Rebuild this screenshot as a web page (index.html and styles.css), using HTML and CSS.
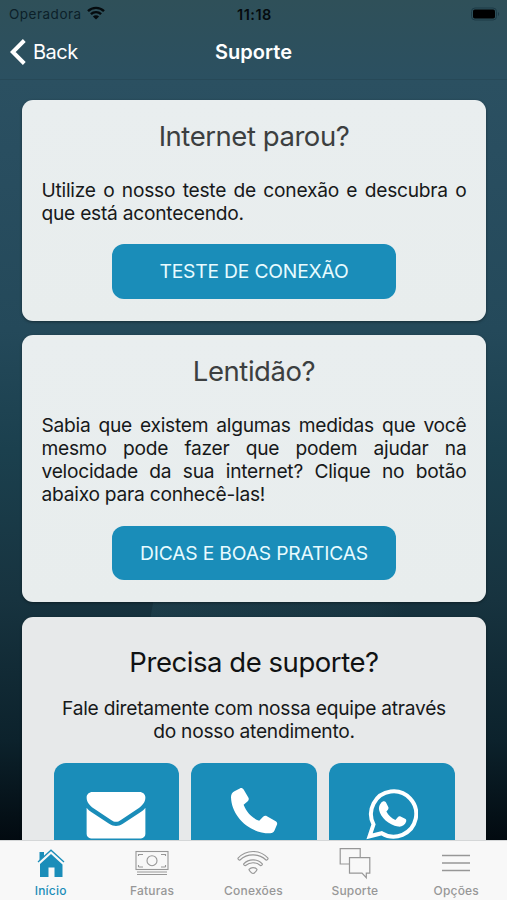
FILE: index.html
```html
<!DOCTYPE html>
<html lang="pt-BR">
<head>
  <meta charset="UTF-8">
  <meta name="viewport" content="width=device-width, initial-scale=1.0">
  <title>Suporte</title>
  <link rel="stylesheet" href="styles.css">
</head>
<body>

  <header class="header">
    <div class="status-bar">
      <div class="carrier">
        <span>Operadora</span>
        <svg class="wifi" viewBox="0 0 18 14" fill="none" stroke="#050b0e" stroke-width="2.4">
          <path d="M1 5.2a11.3 11.3 0 0 1 16 0M3.9 8.2a7.2 7.2 0 0 1 10.2 0"/>
          <path d="M9 13.6L5.9 10.5a4.4 4.4 0 0 1 6.2 0z" fill="#050b0e" stroke="none"/>
        </svg>
      </div>
      <span class="clock">11:18</span>
      <svg class="battery" viewBox="0 0 30 14">
        <rect x="1.500" y="1" width="25" height="12" rx="3.5" fill="none" stroke="#1c3a46"/>
        <rect x="3" y="2.500" width="22" height="9" rx="1.800" fill="#000"/>
        <path d="M28 5v4c1.500-.8 1.500-3.200 0-4z" fill="#1c3a46"/>
      </svg>
    </div>
    <nav class="nav-bar">
      <a class="back" href="#">
        <svg viewBox="0 0 16 26" fill="none" stroke="#fff" stroke-width="4"><path d="M14.300 1.500L2.800 13l11.500 11.500"/></svg>
        <span>Back</span>
      </a>
      <h1 class="nav-title">Suporte</h1>
    </nav>
  </header>

  <main class="content">
    <section class="card">
      <h2 class="card-title">Internet parou?</h2>
      <p class="card-text">Utilize o nosso teste de conexão e descubra o que está acontecendo.</p>
      <button class="btn">TESTE DE CONEXÃO</button>
    </section>

    <section class="card">
      <h2 class="card-title">Lentidão?</h2>
      <p class="card-text">Sabia que existem algumas medidas que você mesmo pode fazer que podem ajudar na velocidade da sua internet? Clique no botão abaixo para conhecê-las!</p>
      <button class="btn">DICAS E BOAS PRATICAS</button>
    </section>

    <section class="card card-support">
      <h2 class="card-title">Precisa de suporte?</h2>
      <p class="card-text">Fale diretamente com nossa equipe através do nosso atendimento.</p>
      <div class="contacts">
        <button class="contact contact-mail" aria-label="E-mail">
          <svg width="60" height="47" viewBox="0 0 60 48" fill="#fff">
            <path d="M6 0h48c3.500 0 6 2.500 6 5.500 0 5-3 8-7 11L35 28.500c-3.500 2.500-6.500 2.500-10 0L7 16.500C3 13.500 0 10.500 0 5.500 0 2.500 2.500 0 6 0z"/>
            <path d="M0 16c1.500 2 3.500 3.500 5.500 5L23 32.500c5 3 9 3 14 0L54.500 21c2-1.500 4-3 5.500-5v27c0 2.500-2 4.500-4.500 4.500h-51C2 47.500 0 45.500 0 43z"/>
          </svg>
        </button>
        <button class="contact" aria-label="Telefone">
          <svg width="47" height="47" viewBox="0 0 48 48" fill="#fff">
            <path d="M3.500 3.300L9 .4c1.500-.8 3-.3 3.900 1.200l4.800 8.200c.8 1.300.5 2.800-.6 3.800l-4.200 3.600c2.900 7.600 8.400 13.500 15.900 16.300l4-4.100c1.100-1.100 2.600-1.300 3.900-.5l9 5.100c1.300.8 1.800 2.200 1.200 3.600l-2.600 6c-.7 1.600-2.200 2.600-4.200 2.600C18.500 46.500.500 29 0 9.200 0 6.500 1.300 4.500 3.500 3.300z"/>
          </svg>
        </button>
        <button class="contact" aria-label="WhatsApp">
          <svg width="52" height="52" viewBox="0 0 52 52">
            <path d="M3.500 48.300l4-12A22.600 22.600 0 1 1 15.700 45.200z" fill="none" stroke="#fff" stroke-width="4"/>
            <path d="M15.200 14.700c1.200-1.600 3.600-2 4.700-.5l2.500 5c.6 1.300-.8 3.200-2 4.300 2 4 5 6.700 9 8.500l2.600-3c.7-.9 1.600-1 2.600-.5l4.500 2.300c1.300.7 1.400 1.500 1 3-1 3.500-4.700 5.400-8 4.800-9.500-1.600-17.500-9-19-16.500-.6-3 .5-5.600 2.100-7.400z" fill="#fff"/>
          </svg>
        </button>
      </div>
    </section>
  </main>

  <nav class="tab-bar">
    <a class="tab active" href="#">
      <svg width="30" height="32" viewBox="0 0 30 32">
        <path d="M4 16L15 6l11.500 10.500V29H18.500V19.500h-6V29H4zM3.500 4H8v4.500l-4.500 4z" fill="#1a8db9"/>
        <path d="M2 14L15 2.200l13 11.800" fill="none" stroke="#1a8db9" stroke-width="1.300"/>
      </svg>
      <span>Início</span>
    </a>
    <a class="tab" href="#">
      <svg width="34" height="32" viewBox="0 0 34 32" fill="none" stroke="#979797" stroke-width="1.100">
        <rect x="1" y="3.500" width="32" height="18"/>
        <circle cx="17" cy="12.700" r="5"/>
        <path d="M3.500 6.500H8M26 6.500h4.500M3.500 19H8M26 19h4.500M2 24h30M2 26.500h30M3.500 6v2M30.500 6v2M3.500 17v2M30.500 17v2"/>
      </svg>
      <span>Faturas</span>
    </a>
    <a class="tab" href="#">
      <svg width="34" height="32" viewBox="0 0 34 32" fill="none" stroke="#979797" stroke-width="1.100" stroke-linejoin="round">
        <path d="M2 10.200c8-9 22-9 30 0 .4.800-1.200 2.300-2 1.800-7-6.800-19-6.800-26 0-.8.500-2.400-1-2-1.800z"/>
        <path d="M7.700 15.800c5-5.300 13.600-5.300 18.600 0 .4.800-1.100 2.200-1.900 1.700-4.200-3.700-10.600-3.700-14.800 0-.8.500-2.300-.9-1.900-1.700z"/>
        <path d="M13 21.300c2.200-2.300 5.800-2.300 8 0 .4.700-2.500 4.200-4 4.200s-4.400-3.500-4-4.200z"/>
      </svg>
      <span>Conexões</span>
    </a>
    <a class="tab" href="#">
      <svg width="34" height="32" viewBox="0 0 34 32" fill="none" stroke="#979797" stroke-width="1.200">
        <path d="M11 16H2.200V.700h20V9.500"/>
        <path d="M11.500 9.700h20.300v15.500h-3.500v4.500L24 25.200H11.500z"/>
      </svg>
      <span>Suporte</span>
    </a>
    <a class="tab" href="#">
      <svg width="30" height="32" viewBox="0 0 30 32" stroke="#979797" stroke-width="1.300">
        <path d="M1 7.500h28M1 15h28M1 22.500h28"/>
      </svg>
      <span>Opções</span>
    </a>
  </nav>

</body>
</html>
```

FILE: styles.css
```css
* {
  box-sizing: border-box;
}

body {
  margin: 0;
  height: 900px;
  display: flex;
  flex-direction: column;
  overflow: hidden;
  font-family: Inter, "Liberation Sans", sans-serif;
  color: #17191a;
  background:
    linear-gradient(100deg, transparent 40px, rgba(45, 85, 100, 0.28) 41px, rgba(45, 85, 100, 0.1) 260px, transparent 290px) 116px 580px / 320px 60px no-repeat,
    linear-gradient(#2f5059 0, #2b5061 80px, #294e60 150px, #24495a 330px, #1b404e 450px, #17333f 600px, #0c222c 740px, #020a10 840px);
}

a {
  color: inherit;
  text-decoration: none;
}

button {
  border: none;
  font-family: inherit;
}

.header {
  height: 80px;
  flex: none;
  border-bottom: 1px solid #274958;
}

.status-bar {
  height: 28px;
  display: grid;
  grid-template-columns: 1fr auto 1fr;
  align-items: center;
  padding: 0 7px 0 9px;
  font-size: 13.500px;
  color: #0c2029;
}

.carrier {
  display: flex;
  align-items: center;
  gap: 5px;
  letter-spacing: 0.5px;
}

.wifi {
  width: 18px;
  height: 14px;
  margin-top: -2px;
}

.clock {
  font-size: 14.500px;
  font-weight: 600;
  letter-spacing: 0.5px;
  color: #050b0e;
}

.battery {
  width: 30px;
  height: 14px;
  margin-top: -1px;
  justify-self: end;
}

.nav-bar {
  height: 48px;
  display: grid;
  grid-template-columns: 1fr auto 1fr;
  align-items: center;
  padding: 0 10px;
  color: #fff;
}

.back {
  display: flex;
  align-items: center;
  gap: 7px;
  font-size: 20px;
  letter-spacing: -0.5px;
}

.back svg {
  width: 16px;
  height: 26px;
}

.nav-title {
  margin: 0;
  font-size: 20px;
  font-weight: 600;
  letter-spacing: 0;
}

.content {
  flex: 1;
  min-height: 0;
  overflow: hidden;
  padding: 20px 21px 0 22px;
  display: flex;
  flex-direction: column;
  gap: 14.500px;
}

.card {
  flex: none;
  padding: 20px 19.500px 22px;
  border-radius: 11px;
  background: linear-gradient(#e9eeef, #e8eded);
  box-shadow: 0 1px 3px rgba(0, 0, 0, 0.4);
  text-align: center;
}

.card-title {
  margin: 0 0 25.500px;
  font-size: 27.500px;
  line-height: 33px;
  font-weight: 400;
  letter-spacing: -0.45px;
  color: #3c3f40;
}

.card-text {
  margin: 0 0 19.300px;
  font-size: 19.200px;
  line-height: 23.200px;
  letter-spacing: -0.25px;
  text-align: justify;
}

.btn {
  display: block;
  width: 284px;
  height: 54.500px;
  margin: 0 auto;
  border-radius: 12px;
  background: #1a8db9;
  color: #e8fbff;
  font-size: 19.300px;
  letter-spacing: -0.2px;
}

.card-support {
  height: 300px;
  padding: 29px 31.500px 0;
  background: #e7e9ea;
}

.card-support .card-title {
  margin-bottom: 18px;
  color: #101213;
}

.card-support .card-text {
  text-align: center;
}

.contacts {
  display: flex;
  gap: 12px;
}

.contact {
  flex: 1;
  height: 126px;
  padding: 25px 0 0;
  border-radius: 12px;
  background: #1a8db9;
  display: flex;
  justify-content: center;
  align-items: flex-start;
}

.contact-mail {
  padding-top: 29px;
}

.tab-bar {
  flex: none;
  height: 60px;
  display: grid;
  grid-template-columns: repeat(5, 1fr);
  background: #f8f8f8;
  border-top: 1px solid #d5d7d8;
}

.tab {
  display: flex;
  flex-direction: column;
  align-items: center;
  padding-top: 7px;
  font-size: 12px;
  font-weight: 500;
  line-height: 15px;
  letter-spacing: 0.2px;
  color: #979797;
}

.tab span {
  margin-top: 3px;
}

.tab.active {
  color: #1a8db9;
}
```
